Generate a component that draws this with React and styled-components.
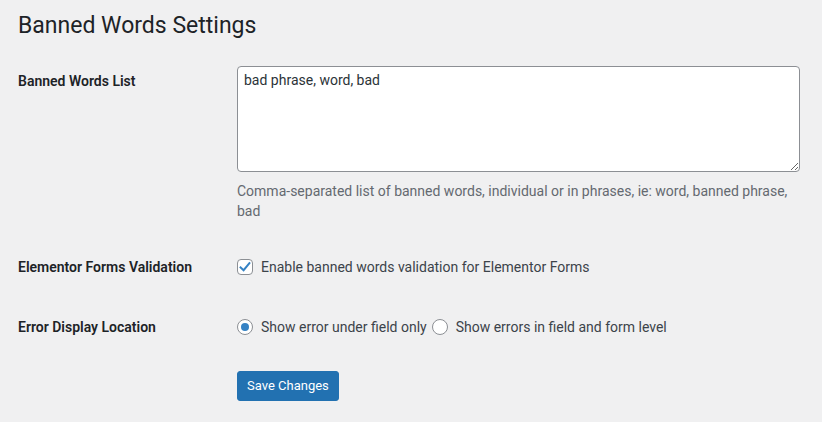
import React from "react";
import styled, { createGlobalStyle } from "styled-components";

const FONT = `Roboto, "Noto Sans", "Liberation Sans", sans-serif`;

const Global = createGlobalStyle`
  html, body { margin: 0; padding: 0; background: #f0f0f1; }
  body { font-family: ${FONT}; font-size: 14px; color: #3c434a; }
  * { box-sizing: border-box; }
`;

const Wrap = styled.div`
  padding: 0 12px 0 18px;
`;

const Title = styled.h1`
  margin: 0;
  padding: 11px 0 2px;
  font-size: 23px;
  font-weight: 400;
  line-height: 30px;
  color: #1d2327;
`;

const FormTable = styled.div`
  margin-top: 8px;
  display: grid;
  grid-template-columns: 209px 1fr;
`;

const Th = styled.div`
  padding: 21px 10px 20px 0;
  font-weight: 600;
  font-size: 14px;
  line-height: 18px;
  color: #1d2327;
`;

const Td = styled.div`
  padding: 15px 10px;
`;

const TextArea = styled.textarea`
  display: block;
  width: 100%;
  height: 106px;
  margin: 0;
  padding: 3px 6px;
  border: 1px solid #8c8f94;
  border-radius: 4px;
  background: #fff;
  font-family: ${FONT};
  font-size: 14px;
  line-height: 20px;
  color: #2c3338;
  resize: both;
  outline: none;
`;

const Description = styled.p`
  margin: 9px 0 1px;
  font-size: 14px;
  line-height: 20px;
  color: #646970;
`;

const InlineRow = styled.div`
  display: flex;
  align-items: center;
  height: 30px;
`;

const Choice = styled.label`
  display: inline-flex;
  align-items: center;
  font-size: 14px;
  color: #3c434a;
  margin-right: ${(p) => p.$mr || 0}px;
  cursor: pointer;
`;

const Box = styled.span`
  width: 16px;
  height: 16px;
  flex: none;
  border: 1px solid #8c8f94;
  border-radius: ${(p) => (p.$round ? "50%" : "4px")};
  background: #fff;
  margin-right: 8px;
  display: inline-flex;
  align-items: center;
  justify-content: center;
`;

const Dot = styled.span`
  width: 8px;
  height: 8px;
  border-radius: 50%;
  background: #3582c4;
`;

const Submit = styled.div`
  padding: 14px 0 0 219px;
`;

const Button = styled.button`
  height: 30px;
  padding: 0 9px;
  border: 1px solid #2271b1;
  border-radius: 3px;
  background: #2271b1;
  color: #fff;
  font-family: ${FONT};
  font-size: 13px;
  line-height: 28px;
  cursor: pointer;
`;

function Check() {
  return (
    <svg width="14" height="14" viewBox="0 0 14 14">
      <path d="M2.6 7.4 L5.6 10.2 L11.4 3.2" fill="none" stroke="#3582c4" strokeWidth="2" strokeLinecap="square" />
    </svg>
  );
}

export default function App() {
  return (
    <>
      <Global />
      <Wrap>
        <Title>Banned Words Settings</Title>
        <FormTable>
          <Th>Banned Words List</Th>
          <Td>
            <TextArea defaultValue="bad phrase, word, bad" />
            <Description>
              Comma-separated list of banned words, individual or in phrases, ie: word, banned phrase, bad
            </Description>
          </Td>

          <Th>Elementor Forms Validation</Th>
          <Td>
            <InlineRow>
              <Choice>
                <Box><Check /></Box>
                Enable banned words validation for Elementor Forms
              </Choice>
            </InlineRow>
          </Td>

          <Th>Error Display Location</Th>
          <Td>
            <InlineRow>
              <Choice $mr={5}>
                <Box $round><Dot /></Box>
                Show error under field only
              </Choice>
              <Choice>
                <Box $round />
                Show errors in field and form level
              </Choice>
            </InlineRow>
          </Td>
        </FormTable>
        <Submit>
          <Button>Save Changes</Button>
        </Submit>
      </Wrap>
    </>
  );
}
